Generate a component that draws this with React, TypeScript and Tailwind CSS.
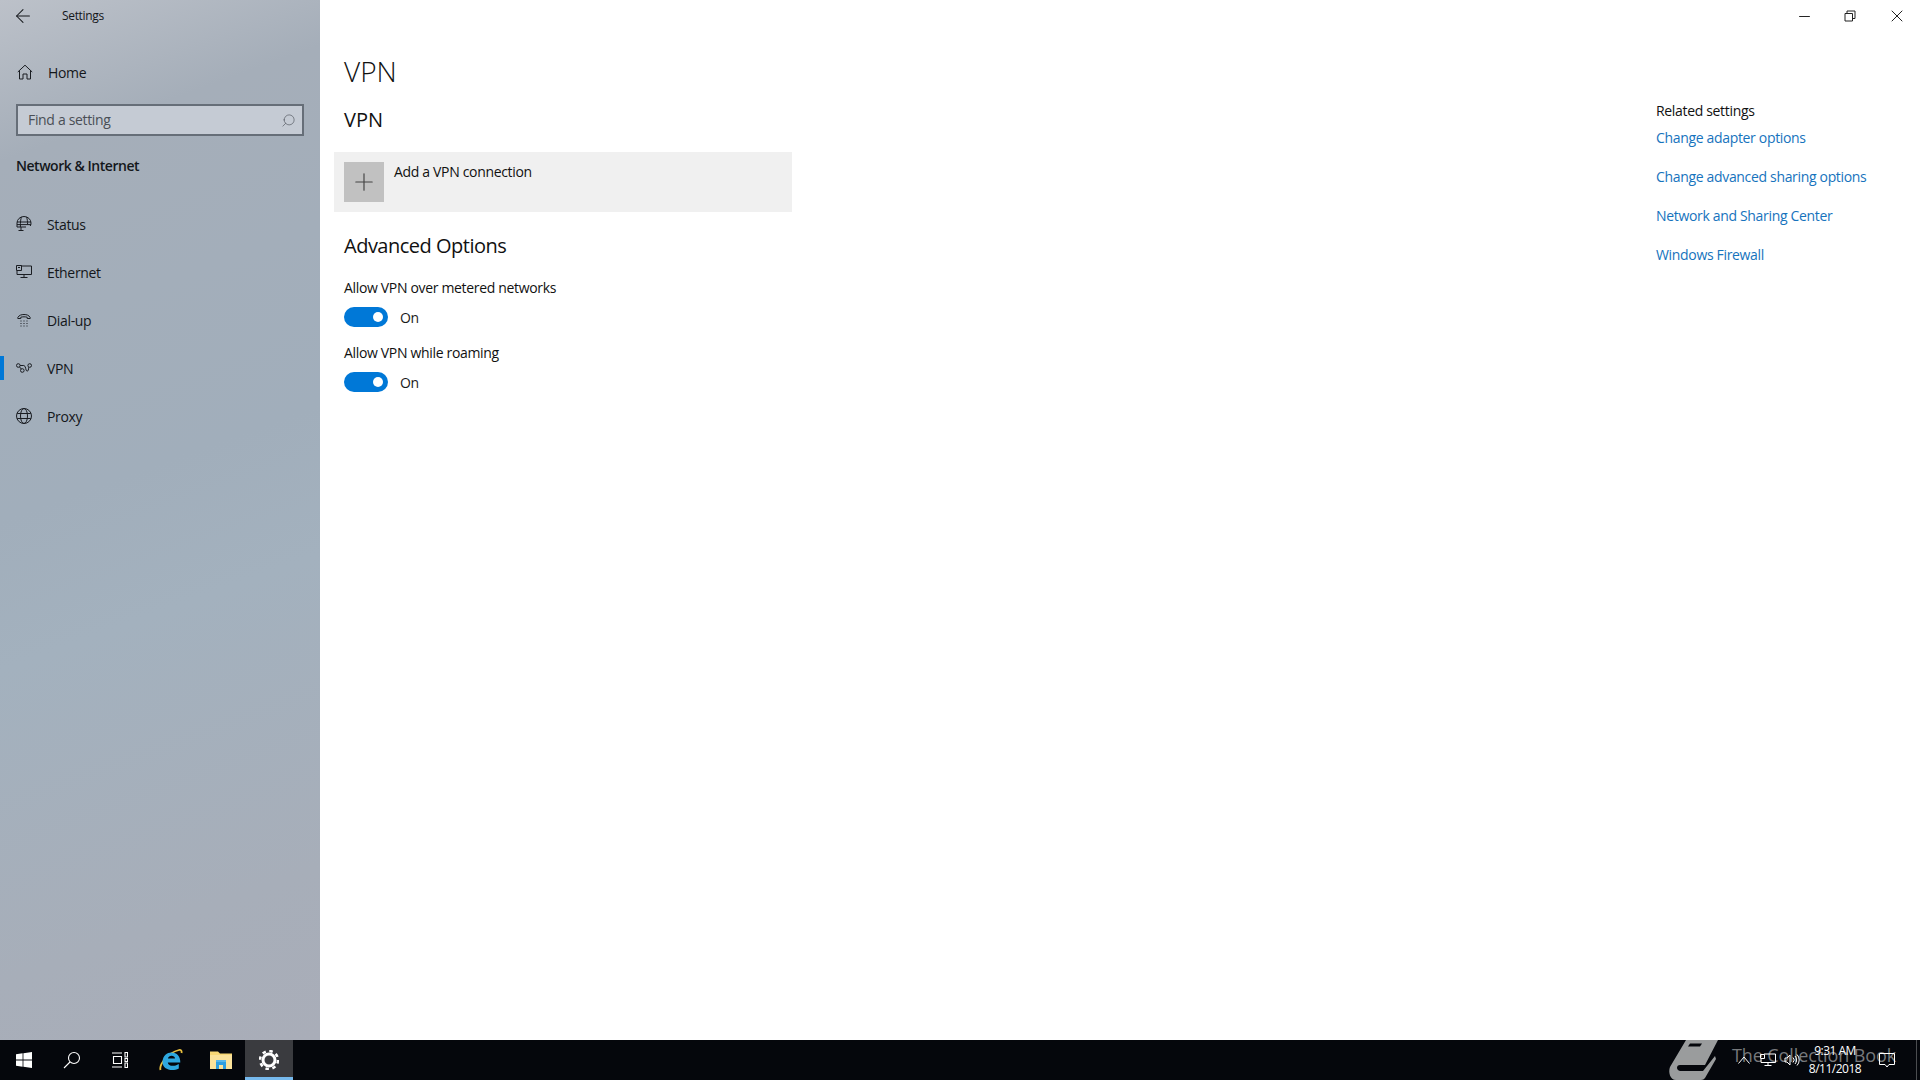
import { ArrowLeft, Plus, Search, X, Minus } from 'lucide-react';

const font = 'font-["Open_Sans","Noto_Sans",sans-serif] tracking-[-0.33px]';

const HomeIcon = () => (
  <svg width="16" height="16" viewBox="0 0 16 16" fill="none" stroke="#1a1d22" strokeWidth="1">
    <path d="M.8 8 8 1.200 15.200 8M2.500 6.600v8.400h3.500v-5h4v5h3.500V6.600" />
  </svg>
);

const StatusIcon = () => (
  <svg width="16" height="16" viewBox="0 0 16 16" fill="none" stroke="#1a1d22" strokeWidth="1">
    <path d="M1 11V7a7 6.500 0 0 1 14 0 5 5 0 0 1-.8 3M1 11h9M1 6h14M1 8.600h14M5.500 1.200C4.600 3 4.400 6 4.400 11M10.500 1.200c.9 1.800 1.100 4.800 1.100 7.400M5 11v3M2.500 14.500h5" />
  </svg>
);

const EthernetIcon = () => (
  <svg width="16" height="16" viewBox="0 0 16 16" fill="none" stroke="#1a1d22" strokeWidth="1">
    <path d="M5 2h10.500v8.500H1V7M8 10.500v3M4.500 13.500h7" />
    <path d="M.5 1.500h5v5h-5zM2 3.500h2" />
  </svg>
);

const DialIcon = () => (
  <svg width="16" height="16" viewBox="0 0 16 16" fill="none" stroke="#1a1d22" strokeWidth="1">
    <path d="M1.800 6.500V5.500C3 3.200 5.500 2.500 8 2.500s5 .7 6.200 3v1h-3V5.200C9.800 4.700 6.200 4.700 4.800 5.200v1.300z" />
    <path d="M4.500 9h1M7.500 9h1M10.500 9h1M4.500 11.500h1M7.500 11.500h1M10.500 11.500h1M4.500 14h1M7.500 14h1M10.500 14h1" />
  </svg>
);

const VpnIcon = () => (
  <svg width="16" height="16" viewBox="0 0 16 16" fill="none" stroke="#1a1d22" strokeWidth="1">
    <circle cx="2.300" cy="5.500" r="1.800" />
    <circle cx="13.700" cy="5.500" r="1.800" />
    <circle cx="6.300" cy="10.500" r="1.800" />
    <path d="M4.100 5.500h3.700c2.400 0 1.500 5.700 3.300 5.700 1 0 1.700-1.700 1.500-3.900M5.300 9 3.500 6.900" />
  </svg>
);

const ProxyIcon = () => (
  <svg width="16" height="16" viewBox="0 0 16 16" fill="none" stroke="#1a1d22" strokeWidth="1">
    <circle cx="8" cy="8" r="7.500" />
    <ellipse cx="8" cy="8" rx="3.500" ry="7.500" />
    <path d="M1.200 5.500h13.600M1.200 10.500h13.600" />
  </svg>
);

const navItems = [
  { label: 'Status', icon: <StatusIcon /> },
  { label: 'Ethernet', icon: <EthernetIcon /> },
  { label: 'Dial-up', icon: <DialIcon /> },
  { label: 'VPN', icon: <VpnIcon />, active: true },
  { label: 'Proxy', icon: <ProxyIcon /> },
];

const relatedLinks = [
  'Change adapter options',
  'Change advanced sharing options',
  'Network and Sharing Center',
  'Windows Firewall',
];

const Toggle = () => (
  <div className="flex h-5 items-center">
    <div className="flex h-5 w-11 items-center justify-end rounded-full bg-[#0078d7] pr-[5px]">
      <div className="h-[10px] w-[10px] rounded-full bg-white" />
    </div>
    <span className="ml-3 pt-px text-[14px] leading-5 text-[#1a1a1a]">On</span>
  </div>
);

const Sidebar = () => (
  <aside className="flex w-[320px] shrink-0 flex-col bg-[linear-gradient(160deg,#bcc1c9_0%,#a5aeb9_14%,#a1aebb_45%,#a3b1be_58%,#a7aeb9_85%,#a9adb8_100%)] text-[#14171b]">
    <div className="flex h-8 items-center pl-3">
      <ArrowLeft size={22} strokeWidth={1.100} className="text-[#14171b]" />
      <span className="ml-[28px] text-[12px]">Settings</span>
    </div>
    <div className="mt-[15px] flex h-[50px] items-center pl-[17px]">
      <HomeIcon />
      <span className="ml-[15px] text-[14px]">Home</span>
    </div>
    <div className="mx-4 mt-[7px] flex h-8 items-center justify-between border-2 border-[#666e78] bg-[#c5cbd4] pl-[10px] pr-[6px]">
      <span className="pb-[2px] text-[14px] text-[#4a4f56]">Find a setting</span>
      <Search size={15} strokeWidth={1} className="-scale-x-100 text-[#4a4f56]" />
    </div>
    <div className="mt-[17px] pl-4 text-[14px] font-semibold leading-[26px] tracking-[-0.47px]">Network &amp; Internet</div>
    <nav className="mt-[21px] flex flex-col">
      {navItems.map((item) => (
        <div key={item.label} className="relative flex h-12 items-center pl-4">
          {item.active && <div className="absolute left-0 top-3 h-6 w-1 bg-[#0078d7]" />}
          {item.icon}
          <span className="ml-[15px] text-[14px]">{item.label}</span>
        </div>
      ))}
    </nav>
  </aside>
);

const MainPanel = () => (
  <main className="flex min-w-0 flex-1 flex-col bg-white pl-[14px] text-[#111]">
    <div className="flex h-8 items-center justify-end text-[#222]">
      <Minus size={17} strokeWidth={1.400} className="mr-[31px]" />
      <svg width="12" height="12" viewBox="0 0 12 12" fill="none" stroke="#222" strokeWidth="1" className="mr-[31px]">
        <path d="M1 3.500h7.500V11H1zM3 3.500V1h8v7.500H8.500" />
      </svg>
      <X size={20} strokeWidth={1.200} className="mr-[13px]" />
    </div>
    <div className="flex flex-1">
      <div className="flex w-[1322px] flex-col">
        <div className="pl-[10px] pt-[14px] text-[28px] font-light leading-[50px] tracking-normal">VPN</div>
        <div className="pl-[10px] pt-[10px] text-[20px] leading-[28px] tracking-normal">VPN</div>
        <div className="mt-[18px] flex h-[60px] w-[458px] items-start bg-[#f0f0f0] pl-[10px] pt-[10px]">
          <div className="flex h-10 w-10 items-center justify-center bg-[#c1c1c1]">
            <Plus size={28} strokeWidth={1} className="text-[#444]" />
          </div>
          <span className="ml-[10px] text-[14px] leading-5">Add a VPN connection</span>
        </div>
        <div className="mt-5 pl-[10px] text-[20px] leading-7 tracking-[-0.5px]">Advanced Options</div>
        <div className="mt-[18px] flex flex-col gap-4 pl-[10px]">
          <div className="flex flex-col gap-[9px]">
            <span className="text-[14px] leading-5">Allow VPN over metered networks</span>
            <Toggle />
          </div>
          <div className="flex flex-col gap-[9px]">
            <span className="text-[14px] leading-5">Allow VPN while roaming</span>
            <Toggle />
          </div>
        </div>
      </div>
      <div className="flex flex-col pt-[69px]">
        <span className="text-[14px] leading-5">Related settings</span>
        <div className="mt-[7px] flex flex-col gap-[19px]">
          {relatedLinks.map((link) => (
            <a key={link} className="text-[14px] leading-5 text-[#1673bd]">{link}</a>
          ))}
        </div>
      </div>
    </div>
  </main>
);

const Taskbar = () => (
  <footer className="relative flex h-10 shrink-0 items-center bg-[#05070c] text-white">
    {/* watermark sits behind the tray */}
    <div className="pointer-events-none absolute bottom-0 left-[1668px] flex h-10 items-center">
      <svg width="54" height="40" viewBox="0 0 54 40" fill="#9a9c9d">
        <path d="M2 27 18 0h32L37 25H12c-4 0-4 5 0 6h23l12-15 1 3-11 19c-1 1-2 2-4 2H8C2 40 0 32 2 27z" />
        <path d="M22 3.500h12L32 6.500H20z" fill="#05070c" />
      </svg>
      <span className="ml-[10px] whitespace-nowrap pb-[10px] text-[18px] leading-6 tracking-[-0.1px] text-[#77797c]">The Collection Book</span>
    </div>

    {/* start */}
    <div className="flex h-10 w-12 items-center justify-center">
      <svg width="16" height="16" viewBox="0 0 16 16" fill="#fff">
        <path d="M0 2.300 6.600 1.300v6.300H0zM7.400 1.200 16 0v7.600H7.400zM0 8.400h6.600v6.300L0 13.700zM7.400 8.400H16V16l-8.600-1.200z" />
      </svg>
    </div>
    <div className="flex h-10 w-12 items-center justify-center">
      <svg width="18" height="18" viewBox="0 0 18 18" fill="none" stroke="#fff" strokeWidth="1.100">
        <circle cx="11" cy="7" r="5.500" />
        <path d="M7 11 1 17" />
      </svg>
    </div>
    <div className="flex h-10 w-12 items-center justify-center">
      <svg width="16" height="16" viewBox="0 0 16 16" fill="none" stroke="#fff" strokeWidth="1.100">
        <path d="M0 1h10M0 15h10M1.500 4.500h8v7h-8zM13 .5V5h2.500V.5zM13 6.500v3h2.500v-3zM13 11v4.500h2.500V11z" />
      </svg>
    </div>
    <div className="flex h-10 w-[53px] items-center justify-center">
      <svg width="24" height="24" viewBox="0 0 24 24" fill="none">
        <path d="M1.500 22C0 17 8 5 20 2c2-.5 3 1 2.500 3" stroke="#e8bf3f" strokeWidth="1.800" />
        <path d="M3.500 13.500C4 7.500 8 4.500 12.500 4.500c5.500 0 9 4 8.800 10H8.800c.3 3.500 6 4.700 11 1.500v4.500C13 24 3 21.500 3.500 13.500zM9 10.500h7c0-3.500-6.500-3.800-7 0z" fill="#2ea8e0" />
      </svg>
    </div>
    <div className="flex h-10 w-12 items-center justify-center">
      <svg width="22" height="20" viewBox="0 0 22 20">
        <path d="M0 1.500h8l2 2h12V19H0z" fill="#f8d775" />
        <path d="M0 5h22v14H0z" fill="#fbe29a" />
        <path d="M6 19v-7h10v7h-3v-4H9v4z" fill="#2e9fe0" />
        <path d="M6 10h10v2H6z" fill="#57b7ea" />
      </svg>
    </div>
    <div className="flex h-10 w-12 items-center justify-center border-b-[3px] border-[#76b9ed] bg-[#3a3b3f] pt-[2px]">
      <svg width="20" height="20" viewBox="0 0 20 20" fill="none" stroke="#fff">
        <circle cx="10" cy="10" r="6" strokeWidth="3" />
        <circle cx="10" cy="10" r="9" strokeWidth="2.500" strokeDasharray="3.500 3.570" />
      </svg>
    </div>

    {/* tray */}
    <div className="relative ml-auto flex items-center">
      <svg width="12" height="8" viewBox="0 0 12 8" fill="none" stroke="#fff" strokeWidth="1">
        <path d="M.5 7.500 6 1l5.500 6.500" />
      </svg>
      <svg width="16" height="14" viewBox="0 0 16 14" fill="none" stroke="#fff" strokeWidth="1" className="ml-[10px]">
        <path d="M4 1h11.500v8.500H1V6M8 9.500v3M4.500 12.500h7M.5 1.500h4v4h-4z" />
      </svg>
      <svg width="16" height="14" viewBox="0 0 16 14" fill="none" stroke="#fff" strokeWidth="1" className="ml-[8px]">
        <path d="M1 5v4h2l3 3V2L3 5zM9 4.500a3.500 3.500 0 0 1 0 5M11 3a6 6 0 0 1 0 8M13 1.500a8 8 0 0 1 0 11" />
      </svg>
      <div className="ml-px flex w-[68px] flex-col items-center text-[12px] leading-[18px] tracking-[-0.5px]">
        <span>9:31 AM</span>
        <span>8/11/2018</span>
      </div>
      <svg width="16" height="16" viewBox="0 0 16 16" fill="none" stroke="#fff" strokeWidth="1" className="ml-[10px]">
        <path d="M.5 1.500h15v11H10L8 15l-2-2.500H.5z" />
      </svg>
      <div className="ml-[21px] mr-[3px] h-10 w-px bg-[#4b4d50]" />
    </div>
  </footer>
);

const App = () => (
  <div className={`flex h-[1080px] w-[1920px] flex-col overflow-hidden ${font}`}>
    <div className="flex min-h-0 flex-1">
      <Sidebar />
      <MainPanel />
    </div>
    <Taskbar />
  </div>
);

export default App;
